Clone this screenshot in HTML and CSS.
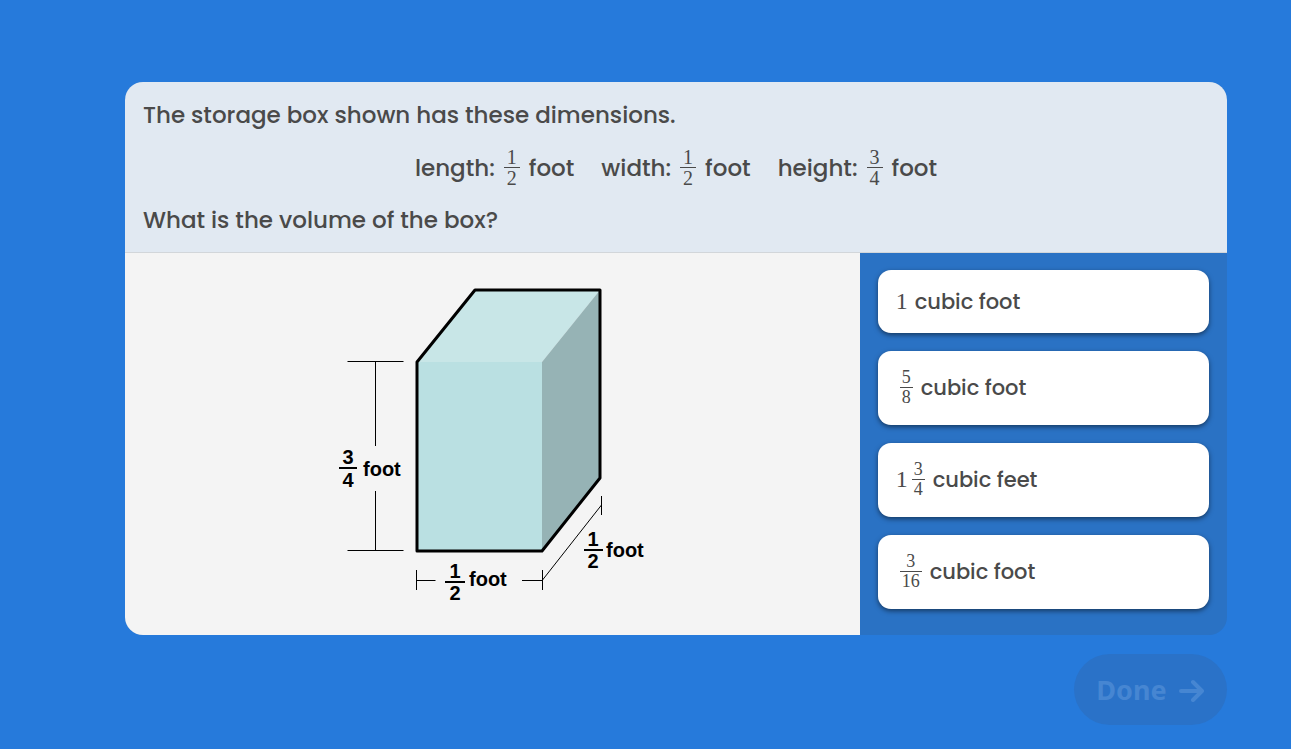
FILE: index.html
```html
<!DOCTYPE html>
<html lang="en">
<head>
<meta charset="utf-8">
<meta name="viewport" content="width=device-width, initial-scale=1">
<title>Volume of a box</title>
<link rel="stylesheet" href="styles.css">
</head>
<body>
<main class="page">
  <section class="card">
    <header class="question">
      <p>The storage box shown has these dimensions.</p>
      <div class="dimensions">
        <span class="dimension">length: <span class="fraction"><span>1</span><span>2</span></span> foot</span>
        <span class="dimension">width: <span class="fraction"><span>1</span><span>2</span></span> foot</span>
        <span class="dimension">height: <span class="fraction"><span>3</span><span>4</span></span> foot</span>
      </div>
      <p>What is the volume of the box?</p>
    </header>
    <div class="figure">
      <svg class="diagram" viewBox="-1 0 327 328" role="img" aria-label="Box with its length, width and height marked">
        <polygon class="face-top" points="87,82 145,10 270,10 212,82"/>
        <polygon class="face-front" points="87,82 212,82 212,271 87,271"/>
        <polygon class="face-side" points="212,82 270,10 270,198 212,271"/>
        <polygon class="outline" points="87,82 145,10 270,10 270,198 212,271 87,271"/>
        <path class="measure" d="M17.500 81.500H73.500M45.500 81.500V166M45.500 211V270.500M17.500 270.500H73.500M86.500 290V310M86.500 300.500H105.500M192 300.500H212.500M212.500 290V310M212.500 300L271.500 225M271.500 216V235"/>
        <path class="bar" d="M9 188H27M115 302H135M254 270H273"/>
        <g class="label">
          <text class="digit" x="18" y="184">3</text>
          <text class="digit" x="18" y="207">4</text>
          <text x="33" y="196">foot</text>
          <text class="digit" x="125" y="298">1</text>
          <text class="digit" x="125" y="320">2</text>
          <text x="139" y="306">foot</text>
          <text class="digit" x="263" y="266">1</text>
          <text class="digit" x="263" y="288">2</text>
          <text x="276" y="277">foot</text>
        </g>
      </svg>
    </div>
    <div class="answers">
      <button class="answer" type="button"><span class="whole">1</span><span class="unit">cubic foot</span></button>
      <button class="answer tall" type="button"><span class="fraction"><span>5</span><span>8</span></span><span class="unit">cubic foot</span></button>
      <button class="answer tall" type="button"><span class="whole mixed">1</span><span class="fraction"><span>3</span><span>4</span></span><span class="unit">cubic feet</span></button>
      <button class="answer tall" type="button"><span class="fraction"><span>3</span><span>16</span></span><span class="unit">cubic foot</span></button>
    </div>
  </section>
  <button class="done" type="button" disabled>Done
    <svg class="arrow" viewBox="0 0 26 24" aria-hidden="true"><path d="M2 13H23M14 4L23 13L14 22"/></svg>
  </button>
</main>
</body>
</html>
```
FILE: styles.css
```css
* {
  box-sizing: border-box;
}

body {
  margin: 0;
  background: #267adb;
  color: #4a4a4a;
  font-family: Poppins, Inter, sans-serif;
  font-weight: 500;
}

.page {
  display: flex;
  flex-direction: column;
  gap: 19px;
  min-height: 100vh;
  padding: 82px 64px 24px 125px;
}

.card {
  display: grid;
  grid-template-columns: 2fr 1fr;
  border-radius: 18px;
  overflow: hidden;
  background: #2a72c4;
}

.question {
  grid-column: 1 / -1;
  display: flex;
  flex-direction: column;
  gap: 17px;
  padding: 18px 18px 17px;
  border-bottom: 1px solid #d2d6da;
  background: #e1e9f2;
  font-size: 23px;
  line-height: 30px;
}

.question p {
  margin: 0;
}

.dimensions {
  display: flex;
  flex-wrap: wrap;
  justify-content: center;
  gap: 27px;
}

.dimension {
  display: flex;
  align-items: center;
  gap: 9px;
}

.fraction {
  display: inline-flex;
  flex-direction: column;
  font-family: "Liberation Serif", serif;
  font-size: 20px;
  font-weight: 400;
  line-height: 20px;
  text-align: center;
}

.fraction span {
  padding: 0 3px;
}

.fraction span + span {
  border-top: 1px solid;
}

.figure {
  display: flex;
  align-items: center;
  justify-content: center;
  padding: 18px;
  background: #f4f4f4;
}

.diagram {
  width: 327px;
  max-width: 100%;
}

.face-top {
  fill: #c8e6e7;
}

.face-front {
  fill: #bae0e2;
}

.face-side {
  fill: #96b3b5;
}

.outline {
  fill: none;
  stroke: #000;
  stroke-width: 3;
  stroke-linejoin: round;
}

.measure {
  fill: none;
  stroke: #000;
  stroke-width: 1;
}

.bar {
  stroke: #000;
  stroke-width: 2;
}

.label {
  fill: #000;
  font: bold 20px "Liberation Sans", sans-serif;
}

.digit {
  text-anchor: middle;
}

.answers {
  display: flex;
  flex-direction: column;
  gap: 18px;
  padding: 17px 18px 26px;
}

.answer {
  display: flex;
  align-items: center;
  min-height: 63px;
  padding: 0 18px 1px;
  border: 0;
  border-radius: 13px;
  background: #fff;
  box-shadow: 0 2px 5px rgba(0, 0, 0, 0.5);
  color: inherit;
  font: inherit;
  font-size: 21px;
  text-align: left;
  cursor: pointer;
}

.tall {
  min-height: 74px;
}

.answer .fraction {
  margin: 0 8px 0 4px;
  font-size: 18px;
  line-height: 19px;
}

.answer .fraction span {
  padding: 0 2px;
}

.whole {
  margin-right: 7px;
  font-family: "Liberation Serif", serif;
  font-size: 24px;
  font-weight: 400;
}

.mixed {
  margin-right: 0;
}

.done {
  display: flex;
  align-items: center;
  justify-content: center;
  gap: 12px;
  align-self: flex-end;
  width: 153px;
  height: 71px;
  padding: 0;
  border: 0;
  border-radius: 36px;
  background: #2a72c8;
  color: #4686d2;
  font: bold 27px "Noto Sans", sans-serif;
}

.arrow {
  width: 26px;
  height: 24px;
  fill: none;
  stroke: currentColor;
  stroke-width: 4;
  stroke-linecap: round;
  stroke-linejoin: round;
}
```
